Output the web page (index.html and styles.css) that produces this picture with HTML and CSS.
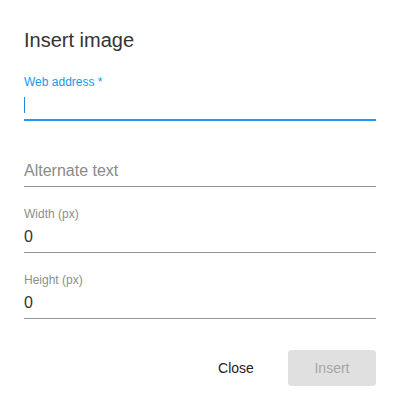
FILE: index.html
```html
<!DOCTYPE html>
<html lang="en">
<head>
  <meta charset="UTF-8">
  <meta name="viewport" content="width=device-width, initial-scale=1.0">
  <title>Insert image</title>
  <link rel="stylesheet" href="styles.css">
</head>
<body>
  <div class="dialog">
    <h2 class="dialog-title">Insert image</h2>

    <!-- Form fields -->
    <div class="fields">
      <div class="field focused">
        <label for="src">Web address *</label>
        <div class="input-wrap">
          <input type="text" id="src" value="">
        </div>
      </div>
      <div class="field">
        <label for="alt"></label>
        <div class="input-wrap">
          <input type="text" id="alt" placeholder="Alternate text">
        </div>
      </div>
      <div class="field">
        <label for="width">Width (px)</label>
        <div class="input-wrap">
          <input type="text" id="width" value="0">
        </div>
      </div>
      <div class="field">
        <label for="height">Height (px)</label>
        <div class="input-wrap">
          <input type="text" id="height" value="0">
        </div>
      </div>
    </div>

    <div class="actions">
      <button class="btn">Close</button>
      <button class="btn btn-disabled" disabled>Insert</button>
    </div>
  </div>
</body>
</html>
```

FILE: styles.css
```css
body {
  margin: 0;
  background: #fff;
  font-family: "Liberation Sans", Arial, Helvetica, sans-serif;
}
.dialog {
  width: 400px;
  height: 398px;
  box-sizing: border-box;
  padding: 24px 24px 12px 24px;
  display: flex;
  flex-direction: column;
}
.dialog-title {
  margin: 0;
  font-size: 20px;
  line-height: 32px;
  font-weight: normal;
  color: #333;
}
.fields {
  margin-top: 19px;
  display: flex;
  flex-direction: column;
  gap: 20px;
}
.field label {
  display: block;
  height: 14px;
  font-size: 12px;
  line-height: 14px;
  color: #8e8e8e;
}
.field.focused label {
  color: #2196f3;
}
.input-wrap {
  position: relative;
  border-bottom: 1px solid #949494;
}
.input-wrap input {
  display: block;
  width: 100%;
  box-sizing: border-box;
  border: none;
  outline: none;
  padding: 6px 0;
  margin: 0;
  height: 31px;
  font-family: inherit;
  font-size: 16px;
  line-height: 19px;
  color: #333;
  background: transparent;
  caret-color: transparent;
}
.input-wrap input::placeholder {
  color: #8a8a8a;
  opacity: 1;
}
.field.focused .input-wrap {
  border-bottom-color: #2196f3;
}
/* focus underline and caret */
.field.focused .input-wrap::after {
  content: "";
  position: absolute;
  left: 0;
  right: 0;
  bottom: -1px;
  height: 2px;
  background: #2196f3;
}
.field.focused .input-wrap::before {
  content: "";
  position: absolute;
  left: 0;
  top: 8px;
  width: 1px;
  height: 16px;
  background: #1e88e5;
}
.actions {
  margin-top: auto;
  display: flex;
  justify-content: flex-end;
  gap: 8px;
}
.btn {
  min-width: 88px;
  height: 36px;
  padding: 0 16px;
  border: none;
  border-radius: 4px;
  background: transparent;
  font-family: inherit;
  font-size: 14px;
  color: #222;
  cursor: pointer;
}
.btn-disabled {
  background: #e0e0e0;
  color: #a6a6a6;
  cursor: default;
}
```
